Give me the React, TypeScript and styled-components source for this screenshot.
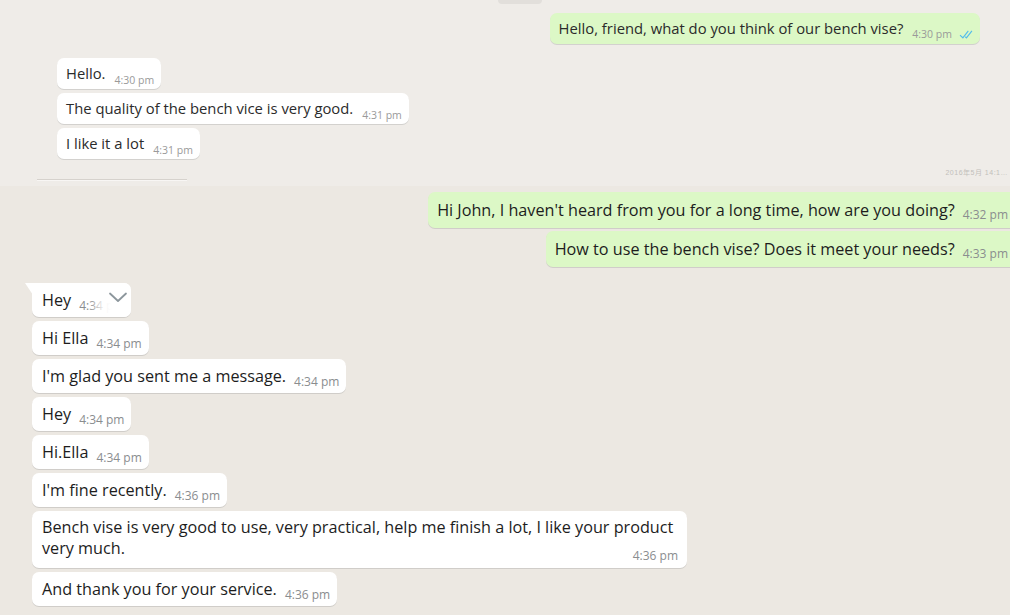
import React from 'react'
import styled, { createGlobalStyle, css } from 'styled-components'

const GlobalStyle = createGlobalStyle`
    html, body {
        margin: 0;
        padding: 0;
    }
    body {
        background: #ece8e2;
        font-family: 'Open Sans', 'Liberation Sans', Arial, sans-serif;
        overflow: hidden;
    }
`

const Pane = styled.div`
    width: 1010px;
    height: 615px;
    overflow: hidden;
    display: flex;
    flex-direction: column;
`

const TopSection = styled.section`
    height: 186px;
    flex-shrink: 0;
    display: flex;
    flex-direction: column;
    padding-right: 30px;
    background: #efece8;
`

const BottomSection = styled.section`
    flex: 1;
    display: flex;
    flex-direction: column;
    padding-top: 6px;
    background: #ece8e2;
`

const DateChip = styled.div`
    width: 44px;
    height: 4px;
    margin-left: 498px;
    border-radius: 0 0 8px 8px;
    background: #e2dfdb;
`

const Group = styled.div<{ $out?: boolean; $inset: number; $top: number; $gap: number }>`
    display: flex;
    flex-direction: column;
    align-items: ${(p) => (p.$out ? 'flex-end' : 'flex-start')};
    gap: ${(p) => p.$gap}px;
    margin-top: ${(p) => p.$top}px;
    ${(p) => (p.$out ? `margin-right: ${p.$inset}px;` : `padding-left: ${p.$inset}px;`)}
`

const Meta = styled.span<{ $small?: boolean }>`
    display: inline-flex;
    align-items: center;
    gap: 7px;
    flex-shrink: 0;
    white-space: nowrap;
    color: #8a8d8f;
    ${(p) =>
        p.$small
            ? css`
                  font-size: 10.5px;
                  line-height: 12px;
                  margin: 0 0 -3px 9px;
                  color: #9a9a9a;
              `
            : css`
                  font-size: 12px;
                  line-height: 14px;
                  margin: 0 0 -3px 8px;
              `}
`

const Bubble = styled.div<{ $out?: boolean; $small?: boolean; $tail?: boolean; $multiline?: boolean }>`
    position: relative;
    box-sizing: border-box;
    display: flex;
    align-items: flex-end;
    background: ${(p) => (p.$out ? '#dcf8c6' : '#ffffff')};
    border-radius: 7px;
    box-shadow: 0 1px 0.5px rgba(11, 20, 26, 0.12);
    ${(p) =>
        p.$small
            ? css`
                  font-size: 14.8px;
                  line-height: 19px;
                  color: #2b2b2b;
                  padding: 6px 7px 6px 9px;
              `
            : css`
                  font-size: 16.2px;
                  line-height: 20px;
                  color: #1d1d1d;
                  padding: 7px 7px 7px 10px;
              `}
    ${(p) =>
        p.$out &&
        !p.$small &&
        css`
            padding: 8px 8px 8px 9px;
        `}
    ${(p) =>
        p.$multiline &&
        css`
            display: flow-root;
            width: 655px;
            line-height: 21px;
            padding: 6px 9px 5px 10px;
            ${Meta} {
                float: right;
                margin: 11px 0 0 12px;
            }
        `}
    ${(p) =>
        p.$tail &&
        css`
            border-top-left-radius: 0;
            &::before {
                content: '';
                position: absolute;
                left: -7px;
                top: 0;
                width: 8px;
                height: 12px;
                background: #ffffff;
                clip-path: polygon(0 0, 100% 0, 100% 100%);
            }
        `}
`

const Text = styled.span``

const Chevron = styled.span`
    position: absolute;
    top: 0;
    right: 0;
    bottom: 0;
    width: 42px;
    display: flex;
    justify-content: flex-end;
    padding: 9px 3px 0 0;
    box-sizing: border-box;
    border-radius: 0 7px 7px 0;
    background: linear-gradient(to right, rgba(255, 255, 255, 0) 0%, rgba(255, 255, 255, 0.9) 35%, #ffffff 55%);
`

const Footer = styled.div`
    display: flex;
    justify-content: space-between;
    align-items: flex-end;
    margin-top: 10px;
    padding-left: 37px;
    margin-right: -28px;
`

const Rule = styled.div`
    width: 150px;
    height: 1px;
    background: #d6d2cd;
    box-shadow: 0 1px 0 #f8f6f4;
`

const Stamp = styled.span`
    font-size: 7px;
    line-height: 8px;
    color: #c2bfbb;
    letter-spacing: 0.5px;
    margin-bottom: 3px;
    font-family: 'Liberation Sans', 'Noto Sans CJK SC', sans-serif;
`

const Ticks = ({ size }: { size: number }) => (
    <svg width={size} height={size * 0.95} viewBox="0 0 16 15" fill="#53bdeb">
        <path d="M15.01 3.316l-.478-.372a.365.365 0 0 0-.51.063L8.666 9.879a.32.32 0 0 1-.484.033l-.358-.325a.319.319 0 0 0-.484.032l-.378.483a.418.418 0 0 0 .036.541l1.32 1.266c.143.14.361.125.484-.033l6.272-8.048a.366.366 0 0 0-.064-.512zm-4.1 0l-.478-.372a.365.365 0 0 0-.51.063L4.566 9.879a.32.32 0 0 1-.484.033L1.891 7.769a.366.366 0 0 0-.515.006l-.423.433a.364.364 0 0 0 .006.514l3.258 3.185c.143.14.361.125.484-.033l6.272-8.048a.365.365 0 0 0-.063-.51z" />
    </svg>
)

const DownIcon = () => (
    <svg width="20" height="11" viewBox="0 0 20 11" fill="none" stroke="#8c969c" strokeWidth="1.8" strokeLinecap="round" strokeLinejoin="round">
        <path d="M2 1.5 L10 9 L18 1.5" />
    </svg>
)

interface Msg {
    text: string
    time: string
    tail?: boolean
    menu?: boolean
    multiline?: boolean
}

const earlyIncoming: Msg[] = [
    { text: 'Hello.', time: '4:30 pm' },
    { text: 'The quality of the bench vice is very good.', time: '4:31 pm' },
    { text: 'I like it a lot', time: '4:31 pm' },
]

const laterOutgoing: Msg[] = [
    { text: "Hi John, I haven't heard from you for a long time, how are you doing?", time: '4:32 pm' },
    { text: 'How to use the bench vise? Does it meet your needs?', time: '4:33 pm' },
]

const laterIncoming: Msg[] = [
    { text: 'Hey', time: '4:34 pm', tail: true, menu: true },
    { text: 'Hi Ella', time: '4:34 pm' },
    { text: "I'm glad you sent me a message.", time: '4:34 pm' },
    { text: 'Hey', time: '4:34 pm' },
    { text: 'Hi.Ella', time: '4:34 pm' },
    { text: "I'm fine recently.", time: '4:36 pm' },
    {
        text: 'Bench vise is very good to use, very practical, help me finish a lot, I like your product very much.',
        time: '4:36 pm',
        multiline: true,
    },
    { text: 'And thank you for your service.', time: '4:36 pm' },
]

const App = () => {
    return (
        <>
            <GlobalStyle />
            <Pane>
                <TopSection>
                    <DateChip />
                    <Group $out $inset={0} $top={9} $gap={4}>
                        <Bubble $out $small>
                            <Text>Hello, friend, what do you think of our bench vise?</Text>
                            <Meta $small>
                                4:30 pm
                                <Ticks size={14} />
                            </Meta>
                        </Bubble>
                    </Group>
                    <Group $inset={57} $top={14} $gap={4}>
                        {earlyIncoming.map((m, i) => (
                            <Bubble key={i} $small>
                                <Text>{m.text}</Text>
                                <Meta $small>{m.time}</Meta>
                            </Bubble>
                        ))}
                    </Group>
                    <Footer>
                        <Rule />
                        <Stamp>2016年5月 14:1…</Stamp>
                    </Footer>
                </TopSection>
                <BottomSection>
                    <Group $out $inset={-29} $top={0} $gap={3}>
                        {laterOutgoing.map((m, i) => (
                            <Bubble key={i} $out>
                                <Text>{m.text}</Text>
                                <Meta>
                                    {m.time}
                                    <Ticks size={16} />
                                </Meta>
                            </Bubble>
                        ))}
                    </Group>
                    <Group $inset={32} $top={16} $gap={4}>
                        {laterIncoming.map((m, i) => (
                            <Bubble key={i} $tail={m.tail} $multiline={m.multiline}>
                                <Text>{m.text}</Text>
                                <Meta>{m.time}</Meta>
                                {m.menu && (
                                    <Chevron>
                                        <DownIcon />
                                    </Chevron>
                                )}
                            </Bubble>
                        ))}
                    </Group>
                </BottomSection>
            </Pane>
        </>
    )
}

export default App
